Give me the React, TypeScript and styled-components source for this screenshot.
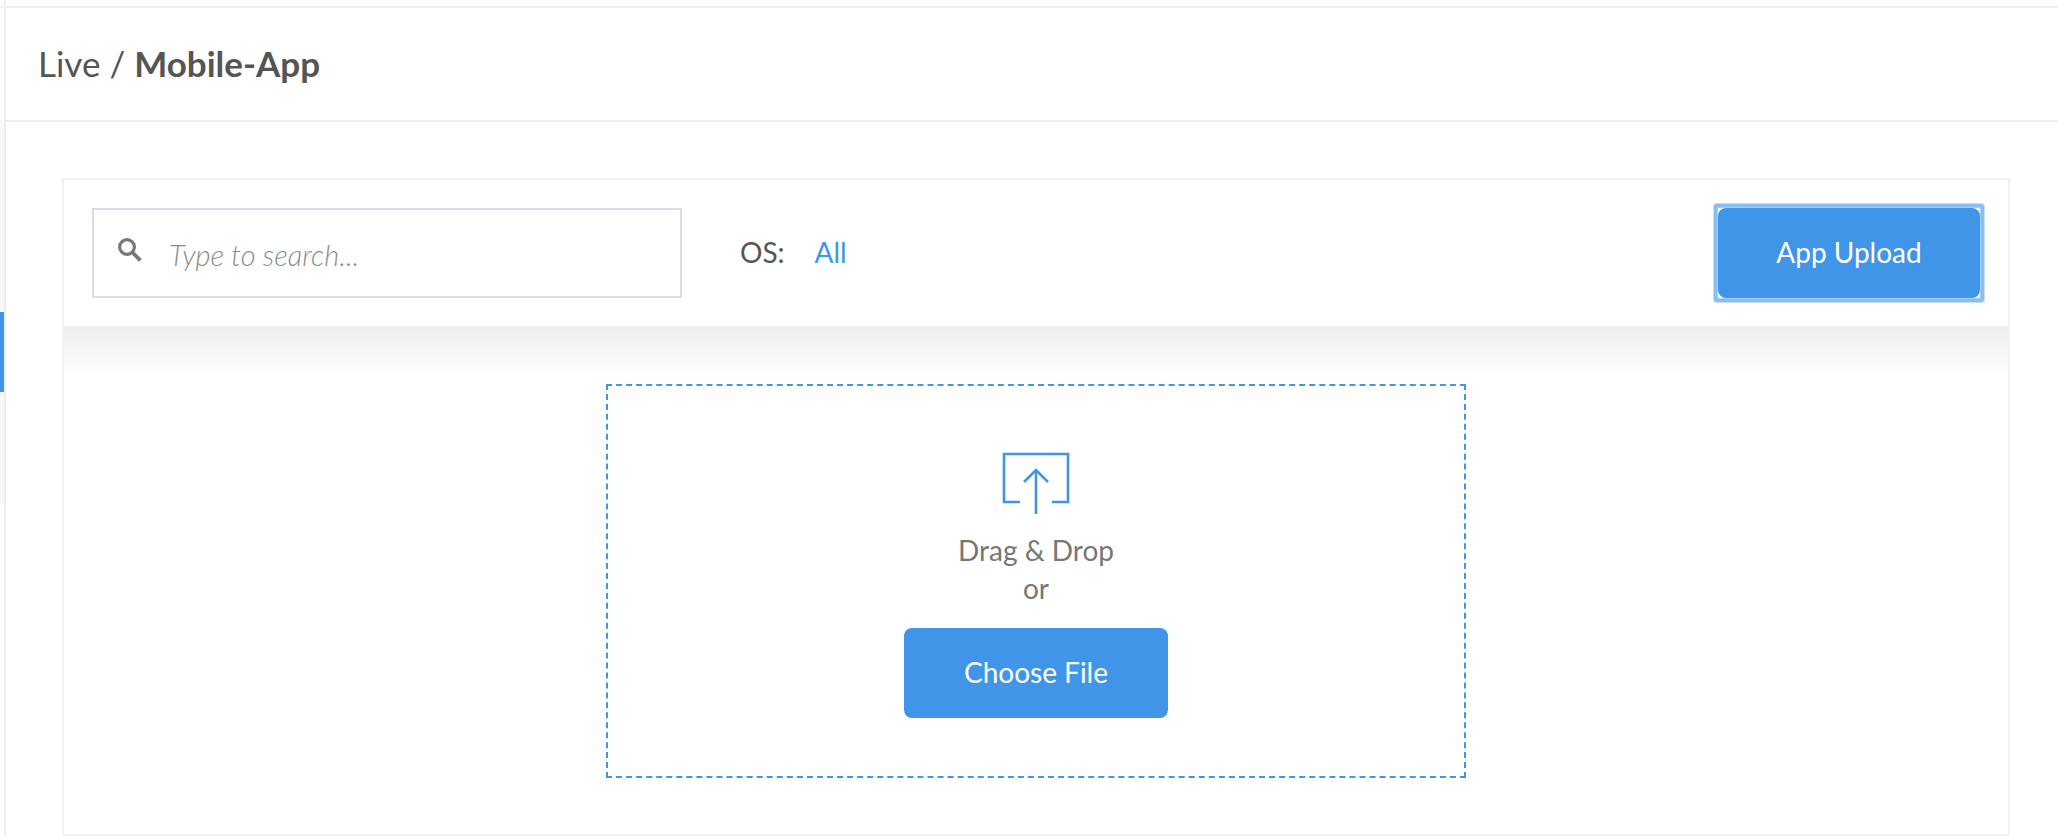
import React from "react";
import styled, { createGlobalStyle } from "styled-components";

const BLUE = "#4195e9";
const LINE = "#eeeeee";
const PANEL_LINE = "#f0f1f6";

const GlobalStyle = createGlobalStyle`
  *, *::before, *::after { box-sizing: border-box; }
  body {
    margin: 0;
    background: #fff;
    color: #555;
    font-family: Lato, "Open Sans", sans-serif;
    font-size: 28px;
    line-height: 38px;
  }
`;

const Shell = styled.div`
  display: flex;
  flex-direction: column;
  min-height: 100vh;
`;

const TopStrip = styled.div`
  height: 8px;
  border-bottom: 2px solid ${LINE};
  padding-left: 4px;
  &::before {
    content: "";
    display: block;
    width: 2px;
    height: 6px;
    background: ${LINE};
  }
`;

const Body = styled.div`
  display: flex;
  flex: 1;
`;

const Sidebar = styled.nav`
  width: 6px;
  flex: none;
  border-right: 2px solid ${LINE};
  padding-top: 112px;
`;

const SideItems = styled.div`
  height: 384px;
  padding-top: 192px;
  background: #f8f8f8;
`;

const ActiveItem = styled.a`
  display: block;
  height: 80px;
  background: ${BLUE};
`;

const Main = styled.main`
  flex: 1;
  min-width: 0;
  display: flex;
  flex-direction: column;
`;

const PageHeader = styled.header`
  display: flex;
  align-items: center;
  height: 114px;
  padding: 0 32px 2px;
  border-bottom: 2px solid ${LINE};
`;

const Title = styled.h1`
  margin: 0;
  font-size: 35px;
  line-height: 44px;
  font-weight: 400;
  white-space: nowrap;
`;

const Panel = styled.section`
  margin: 56px 48px 0 56px;
  border: 2px solid ${PANEL_LINE};
`;

const Toolbar = styled.div`
  display: flex;
  align-items: center;
  padding: 28px;
  border-bottom: 2px solid ${PANEL_LINE};
`;

const SearchBox = styled.label`
  display: flex;
  align-items: flex-start;
  width: 590px;
  height: 90px;
  padding: 24px;
  gap: 27px;
  border: 2px solid #d9dce3;
  color: #777;
  svg {
    flex: none;
    margin-top: 4px;
  }
`;

const SearchInput = styled.input`
  flex: 1;
  min-width: 0;
  height: 42px;
  padding: 0;
  border: 0;
  outline: 0;
  background: transparent;
  color: #555;
  font: italic 300 29px/42px Lato, "Open Sans", sans-serif;
  &::placeholder { color: #8c8c8c; opacity: 1; }
`;

const Filter = styled.div`
  display: flex;
  gap: 30px;
  margin-left: 58px;
  padding-bottom: 2px;
`;

const FilterLink = styled.a`
  color: ${BLUE};
  text-decoration: none;
`;

const Button = styled.button`
  display: block;
  width: 264px;
  height: 90px;
  padding: 0 0 2px;
  border: 0;
  border-radius: 8px;
  background: ${BLUE};
  color: #fff;
  font: inherit;
  cursor: pointer;
`;

const FocusRing = styled.div`
  margin-left: auto;
  border-radius: 1px;
  box-shadow: 0 0 0 1px #a8d0f5, 0 0 0 4px #88bef2, 0 0 0 5px #c3def8;
  ${Button} { width: 262px; }
`;

const UploadArea = styled.div`
  display: flex;
  justify-content: center;
  padding: 56px 28px;
  background: linear-gradient(#eeeeee, #ffffff) top / 100% 50px no-repeat;
`;

const DropZone = styled.div`
  display: flex;
  flex-direction: column;
  align-items: center;
  width: 860px;
  height: 394px;
  padding-top: 66px;
  border: 2px dashed ${BLUE};
  background: #fff;
`;

const DropText = styled.p`
  margin: 17px 0 21px;
  color: #777;
  text-align: center;
`;

function SearchIcon() {
  return (
    <svg width="24" height="24" viewBox="0 0 24 24" fill="none" stroke="currentColor" aria-hidden="true">
      <circle cx="9" cy="9" r="7.4" strokeWidth="3.2" />
      <path d="M14.5 14.5L22.4 22.4" strokeWidth="3.8" />
    </svg>
  );
}

function UploadIcon() {
  return (
    <svg width="68" height="62" viewBox="0 0 68 62" fill="none" stroke={BLUE} strokeWidth="2.6" aria-hidden="true">
      <path d="M18 50H2V2H66V50H50" />
      <path d="M34 62V18" />
      <path d="M22 30L34 18L46 30" />
    </svg>
  );
}

export default function App() {
  return (
    <>
      <GlobalStyle />
      <Shell>
        <TopStrip />
        <Body>
          <Sidebar>
            <SideItems>
              <ActiveItem href="#live" aria-label="Live" />
            </SideItems>
          </Sidebar>
          <Main>
            <PageHeader>
              <Title>
                Live / <strong>Mobile-App</strong>
              </Title>
            </PageHeader>
            <Panel>
              <Toolbar>
                <SearchBox>
                  <SearchIcon />
                  <SearchInput type="text" aria-label="Search apps" placeholder="Type to search..." />
                </SearchBox>
                <Filter>
                  <span>OS:</span>
                  <FilterLink href="#all">All</FilterLink>
                </Filter>
                <FocusRing>
                  <Button type="button">App Upload</Button>
                </FocusRing>
              </Toolbar>
              <UploadArea>
                <DropZone>
                  <UploadIcon />
                  <DropText>
                    Drag &amp; Drop
                    <br />
                    or
                  </DropText>
                  <Button type="button">Choose File</Button>
                </DropZone>
              </UploadArea>
            </Panel>
          </Main>
        </Body>
      </Shell>
    </>
  );
}
